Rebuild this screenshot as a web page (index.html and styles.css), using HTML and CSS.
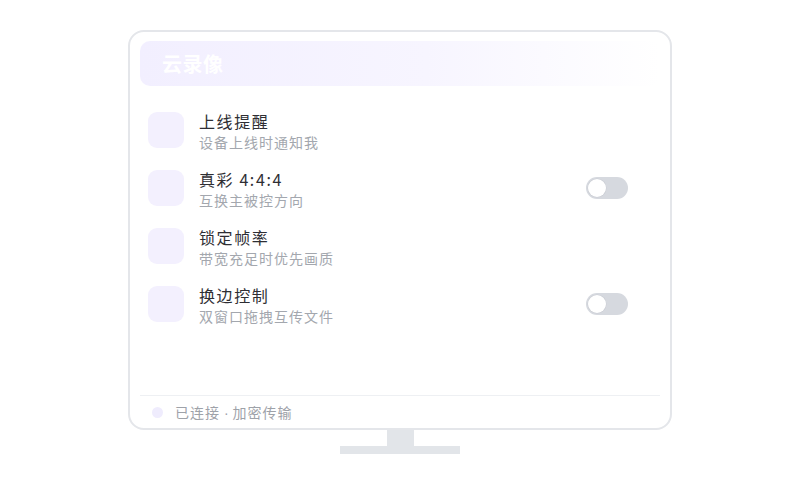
FILE: index.html
```html
<!DOCTYPE html>
<html lang="zh">
<head>
<meta charset="utf-8">
<link rel="stylesheet" href="styles.css">
</head>
<body>
<div class="stage">
  <div class="monitor">
    <div class="screen">
      <div class="header"><span class="header-title">云录像</span></div>
      <div class="list">
        <div class="row">
          <div class="icon"></div>
          <div class="texts">
            <div class="title">上线提醒</div>
            <div class="sub">设备上线时通知我</div>
          </div>
        </div>
        <div class="row">
          <div class="icon"></div>
          <div class="texts">
            <div class="title">真彩 4:4:4</div>
            <div class="sub">互换主被控方向</div>
          </div>
          <div class="toggle"><span class="knob"></span></div>
        </div>
        <div class="row">
          <div class="icon"></div>
          <div class="texts">
            <div class="title">锁定帧率</div>
            <div class="sub">带宽充足时优先画质</div>
          </div>
        </div>
        <div class="row">
          <div class="icon"></div>
          <div class="texts">
            <div class="title">换边控制</div>
            <div class="sub">双窗口拖拽互传文件</div>
          </div>
          <div class="toggle"><span class="knob"></span></div>
        </div>
      </div>
      <div class="footer">
        <span class="dot"></span>
        <span class="status">已连接<span class="sep"> · </span>加密传输</span>
      </div>
    </div>
    <div class="neck"></div>
    <div class="base"></div>
  </div>
</div>
</body>
</html>
```
FILE: styles.css
```css
* { box-sizing: border-box; }
html, body { margin: 0; padding: 0; background: #ffffff; }
body {
  font-family: "Noto Sans CJK SC", "Noto Sans", sans-serif;
  width: 800px;
  height: 500px;
  overflow: hidden;
}
.stage {
  display: flex;
  justify-content: center;
  padding-top: 30px;
}
.monitor {
  display: flex;
  flex-direction: column;
  align-items: center;
  width: 544px;
}
.screen {
  width: 544px;
  height: 400px;
  border: 2px solid #e4e6ea;
  border-radius: 16px;
  background: #ffffff;
  padding: 9px 10px 0 10px;
  display: flex;
  flex-direction: column;
}
.header {
  height: 45px;
  border-radius: 10px;
  background: linear-gradient(90deg, #f2efff 0%, #f7f5ff 55%, #ffffff 100%);
  display: flex;
  align-items: center;
  padding-left: 22px;
}
.header-title {
  color: #ffffff;
  font-size: 20px;
  font-weight: 700;
  letter-spacing: 0.5px;
}
.list {
  margin-top: 26px;
  display: flex;
  flex-direction: column;
  gap: 22px;
  padding: 0 32px 0 8px;
}
.row {
  display: flex;
  align-items: flex-start;
  height: 36px;
}
.icon {
  width: 36px;
  height: 36px;
  border-radius: 9px;
  background: #f3f0fe;
  flex: none;
}
.texts {
  margin-left: 15px;
  margin-top: -2px;
  flex: 1;
  display: flex;
  flex-direction: column;
}
.title {
  font-size: 16px;
  line-height: 22px;
  letter-spacing: 1.6px;
  color: #2e2e33;
}
.sub {
  font-size: 14px;
  line-height: 21px;
  letter-spacing: 1px;
  color: #a3a7ae;
}
.toggle {
  width: 42px;
  height: 22px;
  border-radius: 11px;
  background: #d6d9df;
  margin-top: 7px;
  position: relative;
  flex: none;
}
.knob {
  position: absolute;
  left: 2px;
  top: 2px;
  width: 18px;
  height: 18px;
  border-radius: 50%;
  background: #ffffff;
  box-shadow: 0 0 0 0.5px #c9ccd3;
}
.footer {
  margin-top: auto;
  height: 33px;
  border-top: 1px solid #eef0f3;
  display: flex;
  align-items: center;
  padding-left: 12px;
}
.dot {
  width: 11px;
  height: 11px;
  border-radius: 50%;
  background: #efecfd;
  margin-right: 12px;
}
.status {
  font-size: 14px;
  letter-spacing: 1px;
  color: #9ea2a9;
}
.sep {
  font-family: "Liberation Sans", sans-serif;
  letter-spacing: 0;
}
.neck {
  width: 27px;
  height: 16px;
  background: #e2e5e9;
}
.base {
  width: 120px;
  height: 8px;
  background: #e2e5e9;
}
```
